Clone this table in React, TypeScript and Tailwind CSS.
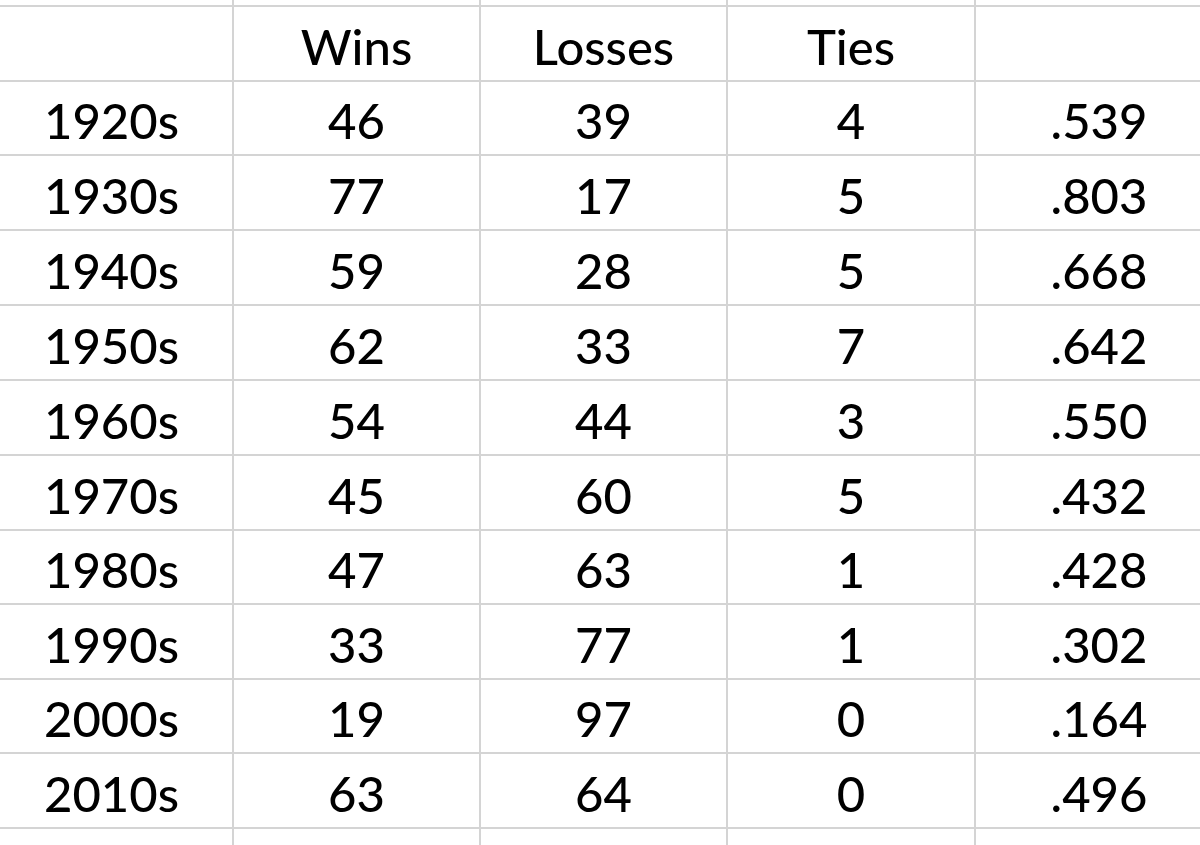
const header = ['', 'Wins', 'Losses', 'Ties', ''];

const rows: [string, string, string, string, string][] = [
  ['1920s', '46', '39', '4', '.539'],
  ['1930s', '77', '17', '5', '.803'],
  ['1940s', '59', '28', '5', '.668'],
  ['1950s', '62', '33', '7', '.642'],
  ['1960s', '54', '44', '3', '.550'],
  ['1970s', '45', '60', '5', '.432'],
  ['1980s', '47', '63', '1', '.428'],
  ['1990s', '33', '77', '1', '.302'],
  ['2000s', '19', '97', '0', '.164'],
  ['2010s', '63', '64', '0', '.496'],
];

function Cell({ text, first }: { text: string; first?: boolean }) {
  return (
    <div
      className={
        'flex items-end border-b-2 border-r-2 border-[#d4d4d4] pb-[9px] leading-none ' +
        (first ? 'justify-start pl-[44px]' : 'justify-center')
      }
    >
      {text}
    </div>
  );
}

export default function App() {
  return (
    <div
      className="w-[1200px] h-[845px] overflow-hidden bg-white text-black text-[49px] font-medium"
      style={{ fontFamily: 'Lato, "Open Sans", sans-serif' }}
    >
      <div className="grid w-[1224px] grid-cols-[234px_247px_247px_248px_248px] grid-rows-[7px_75px_74px_75px_75px_75px_75px_75px_74px_75px_74px_75px_40px]">
        {/* top strip */}
        {header.map((_, i) => (
          <div key={'t' + i} className="border-b-2 border-r-2 border-[#d4d4d4]" />
        ))}
        {header.map((h, i) => (
          <Cell key={'h' + i} text={h} />
        ))}
        {rows.map(r =>
          r.map((c, i) => <Cell key={r[0] + i} text={c} first={i === 0} />)
        )}
        {/* trailing strip */}
        {header.map((_, i) => (
          <div key={'b' + i} className="border-r-2 border-[#d4d4d4]" />
        ))}
      </div>
    </div>
  );
}
